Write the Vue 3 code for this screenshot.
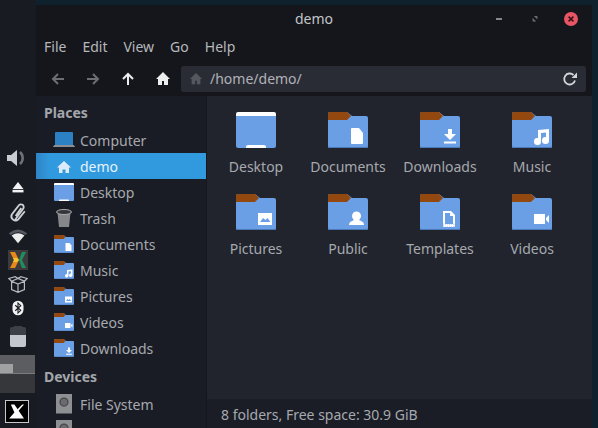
<script setup>
const places = [
  { name: 'Computer', icon: 'computer' },
  { name: 'demo', icon: 'home', active: true },
  { name: 'Desktop', icon: 'desktop' },
  { name: 'Trash', icon: 'trash' },
  { name: 'Documents', icon: 'documents' },
  { name: 'Music', icon: 'music' },
  { name: 'Pictures', icon: 'pictures' },
  { name: 'Videos', icon: 'videos' },
  { name: 'Downloads', icon: 'downloads' },
]

const devices = [
  { name: 'File System', icon: 'disk' },
  { name: 'recovery area on samsung nvme', icon: 'disk' },
]

const folders = [
  { name: 'Desktop', icon: 'desktop' },
  { name: 'Documents', icon: 'documents' },
  { name: 'Downloads', icon: 'downloads' },
  { name: 'Music', icon: 'music' },
  { name: 'Pictures', icon: 'pictures' },
  { name: 'Public', icon: 'public' },
  { name: 'Templates', icon: 'templates' },
  { name: 'Videos', icon: 'videos' },
]

const menu = ['File', 'Edit', 'View', 'Go', 'Help']
</script>

<template>
  <div class="desktop">
    <!-- shared folder artwork, 40x36 -->
    <svg class="defs" width="0" height="0">
      <defs>
        <symbol id="folder" viewBox="0 0 40 36">
          <path d="M0 2q0-2 2-2h17l5 4h14q2 0 2 2v28q0 2-2 2H2q-2 0-2-2z" fill="#6a9fe6" />
          <path d="M0 2q0-2 2-2h17l4 4-4 4H0z" fill="#93480f" />
          <rect y="35" width="40" height="1" fill="#4a78b8" />
        </symbol>
        <symbol id="desktop" viewBox="0 0 40 36">
          <path d="M0 4h40v30q0 2-2 2H2q-2 0-2-2z" fill="#6a9fe6" />
          <path d="M0 2q0-2 2-2h36q2 0 2 2v2H0z" fill="#fff" />
          <path d="M10 36v-1q0-2 2-2h16q2 0 2 2v1z" fill="#fff" />
        </symbol>
        <symbol id="documents" viewBox="0 0 40 36">
          <use href="#folder" width="40" height="36" />
          <path d="M23 17q0-1 1-1h7l4 5v10q0 1-1 1H24q-1 0-1-1z" fill="#fff" />
        </symbol>
        <symbol id="downloads" viewBox="0 0 40 36">
          <use href="#folder" width="40" height="36" />
          <path d="M28 17h4v5h4l-6 6-6-6h4z" fill="#fff" />
          <rect x="24" y="29.500" width="12" height="2" fill="#fff" />
        </symbol>
        <symbol id="music" viewBox="0 0 40 36">
          <use href="#folder" width="40" height="36" />
          <path d="M26 18l11-1v11.500a3.500 3.500 0 1 1-3-3.400V20.500l-5 .5v8.500a3.500 3.500 0 1 1-3-3.400z" fill="#fff" />
        </symbol>
        <symbol id="pictures" viewBox="0 0 40 36">
          <use href="#folder" width="40" height="36" />
          <rect x="22" y="19" width="14" height="12" fill="#fff" />
          <path d="M24 28l3-4 2.500 2 2-2 3 4z" fill="#6a9fe6" />
        </symbol>
        <symbol id="public" viewBox="0 0 40 36">
          <use href="#folder" width="40" height="36" />
          <circle cx="28.500" cy="22" r="4.500" fill="#fff" />
          <path d="M21 31q0-3 3-4l2-1h5l2 1q3 1 3 4z" fill="#fff" />
        </symbol>
        <symbol id="templates" viewBox="0 0 40 36">
          <use href="#folder" width="40" height="36" />
          <path d="M23 17h8l4 4v12H23z" fill="#fff" />
          <path d="M25 19h5v3h3v8h-8z" fill="#6a9fe6" />
          <path d="M23 30h12v3H23z" fill="#fff" stroke="#6a9fe6" stroke-width=".6" stroke-dasharray="1 1" />
        </symbol>
        <symbol id="videos" viewBox="0 0 40 36">
          <use href="#folder" width="40" height="36" />
          <rect x="22" y="20" width="11" height="10" fill="#fff" />
          <path d="M34 24l3-3v8l-3-3z" fill="#fff" />
        </symbol>
        <symbol id="computer" viewBox="0 0 40 36" overflow="visible">
          <path d="M2 4q0-2 2-2h32q2 0 2 2v24H2z" fill="#2c80c4" />
          <path d="M-2 31l3-3h38l3 3v1H-2z" fill="#8b8e94" />
        </symbol>
        <symbol id="home" viewBox="0 0 40 36">
          <path d="M20 8L6 21h4v11h7v-7h6v7h7V21h4z" fill="#dcebf7" />
        </symbol>
        <symbol id="trash" viewBox="0 0 40 36">
          <path d="M7 7h26l-3 29H10z" fill="#85878b" />
          <ellipse cx="20" cy="6" rx="15" ry="5" fill="#34363a" stroke="#a9abae" stroke-width="2" />
        </symbol>
        <symbol id="disk" viewBox="0 0 40 36" overflow="visible">
          <rect x="4" y="-2" width="32" height="39" fill="#8e8f92" />
          <circle cx="20" cy="14" r="8" fill="#6a6b6e" stroke="#47484b" stroke-width="2.500" />
        </symbol>
      </defs>
    </svg>

    <aside class="dock">
      <div class="tray">
        <svg class="tray-icon sound" viewBox="0 0 24 24">
          <path d="M3 9h4l6-5v16l-6-5H3z" fill="#c9ccd1" />
          <path d="M16 6a8 8 0 0 1 0 12" fill="none" stroke="#6f7278" stroke-width="2.500" />
        </svg>
        <svg class="tray-icon" viewBox="0 0 24 24">
          <path d="M12 5.500l6 7.500H6z" fill="#f1f2f3" />
          <rect x="6" y="14" width="12" height="2.800" fill="#f1f2f3" />
        </svg>
        <svg class="tray-icon" viewBox="0 0 24 24">
          <path d="M8 20l10-11a3 3 0 0 0-4.500-4L5 14a4.500 4.500 0 0 0 6.500 6l8-8M9 16l7-8" fill="none" stroke="#cfd1d5" stroke-width="2" transform="rotate(-6 12 12)" />
        </svg>
        <svg class="tray-icon" viewBox="0 0 24 24">
          <path d="M2 9q10-8 20 0l-2 2q-8-6-16 0z" fill="#55585e" />
          <path d="M5 11.500q7-5 14 0L12 20z" fill="#eceded" />
        </svg>
        <div class="app-badge">
          <svg viewBox="0 0 20 20">
            <rect width="20" height="20" fill="#3d3a3c" />
            <path d="M2 2h5l4 8-4 8H2l4-8z" fill="#e8871a" />
            <path d="M18 2h-4l-3 8 3 8h4l-4-8z" fill="#1f8f63" />
            <path d="M5 8h4l2 2-2 2H5l1-2z" fill="#f4c430" />
          </svg>
        </div>
        <svg class="tray-icon" viewBox="0 0 24 24">
          <path d="M5 9l7-3 7 3v9l-7 3-7-3zM5 9l7 3 7-3M12 12v9M5 9L2 6l7-2 3 2 3-2 7 2-3 3" fill="none" stroke="#b8bac0" stroke-width="1.300" />
        </svg>
        <svg class="tray-icon" viewBox="0 0 24 24">
          <rect x="6" y="4" width="12" height="16" rx="6" fill="#f1f2f3" />
          <path d="M9 9l6 5.500-3 3V6.500l3 3L9 15" fill="none" stroke="#1a1c24" stroke-width="1.200" />
        </svg>
        <div class="battery"><span class="battery-cap" /><span class="battery-level" /></div>
      </div>
      <div class="pager">
        <div class="pager-top"><span class="pager-win" /></div>
        <div class="pager-bottom" />
      </div>
      <div class="start">
        <svg viewBox="0 0 24 24">
          <path d="M5 4h4l11 16H3l6-7z" fill="#fff" />
          <path d="M18 4h2l-7 8-1-2z" fill="#fff" />
        </svg>
      </div>
    </aside>

    <main class="window">
      <div class="titlebar">
        <span class="title">demo</span>
        <div class="win-buttons">
          <span class="btn-min" />
          <svg class="btn-max" viewBox="0 0 10 10">
            <path d="M3 0h6v6zM1 3l6 6H1z" fill="#6b6d72" />
          </svg>
          <span class="btn-close">
            <svg viewBox="0 0 10 10"><path d="M2 2l6 6M8 2l-6 6" stroke="#3a1418" stroke-width="2" /></svg>
          </span>
        </div>
      </div>

      <nav class="menubar">
        <span v-for="item in menu" :key="item">{{ item }}</span>
      </nav>

      <div class="toolbar">
        <svg class="tool" viewBox="0 0 16 16"><path d="M14 8H3M8 3L3 8l5 5" fill="none" stroke="#6c6e73" stroke-width="2" /></svg>
        <svg class="tool" viewBox="0 0 16 16"><path d="M2 8h11M8 3l5 5-5 5" fill="none" stroke="#6c6e73" stroke-width="2" /></svg>
        <svg class="tool" viewBox="0 0 16 16"><path d="M8 14V3M3 8l5-5 5 5" fill="none" stroke="#eceded" stroke-width="2" /></svg>
        <svg class="tool" viewBox="0 0 16 16"><path d="M8 1L1 8h2v6h4v-4h2v4h4V8h2z" fill="#eceded" /></svg>
        <div class="location">
          <svg class="loc-home" viewBox="0 0 16 16"><path d="M8 1L1 8h2v6h4v-4h2v4h4V8h2z" fill="#55575e" /></svg>
          <span class="path">/home/demo/</span>
          <svg class="reload" viewBox="0 0 16 16">
            <path d="M13 9.500A5.500 5.500 0 1 1 11.500 4" fill="none" stroke="#d5d6d9" stroke-width="1.800" />
            <path d="M15 1.500V7H9.500z" fill="#d5d6d9" />
          </svg>
        </div>
      </div>

      <div class="body">
        <section class="sidebar">
          <h3>Places</h3>
          <div v-for="p in places" :key="p.name" class="side-row" :class="{ active: p.active }">
            <svg class="side-icon"><use :href="'#' + p.icon" /></svg>
            <span>{{ p.name }}</span>
          </div>
          <h3 class="devices">Devices</h3>
          <div v-for="d in devices" :key="d.name" class="side-row">
            <svg class="side-icon"><use :href="'#' + d.icon" /></svg>
            <span>{{ d.name }}</span>
          </div>
        </section>

        <section class="files">
          <div class="grid">
            <div v-for="f in folders" :key="f.name" class="item">
              <svg class="item-icon"><use :href="'#' + f.icon" /></svg>
              <span>{{ f.name }}</span>
            </div>
          </div>
          <footer class="status">8 folders, Free space: 30.9 GiB</footer>
        </section>
      </div>
    </main>
  </div>
</template>

<style>
html, body { margin: 0; background: #10212e; overflow: hidden; }
</style>

<style scoped>
.desktop {
  width: 598px;
  height: 428px;
  display: flex;
  overflow: hidden;
  position: relative;
  background: #10212e;
  font-family: "Noto Sans", sans-serif;
  font-size: 14px;
  color: #aeb1b6;
}

.defs { position: absolute; }

.dock {
  width: 36px;
  flex: none;
  background: #191b23;
  display: flex;
  flex-direction: column;
  box-sizing: border-box;
  padding-top: 146px;
}

.tray { display: flex; flex-direction: column; align-items: center; width: 35px; height: 209px; }

.tray-icon { width: 22px; height: 22px; margin: 1px 0; display: block; flex: none; }
.sound { margin: 0 4px 6px 0; width: 24px; height: 24px; }

.app-badge { width: 20px; height: 20px; margin: 2px 0; flex: none; }
.app-badge svg { display: block; width: 100%; height: 100%; }

.battery {
  width: 16px;
  height: 20px;
  margin-top: 7px;
  flex: none;
  background: #3d4047;
  border-radius: 2px;
  position: relative;
  display: flex;
  align-items: flex-end;
}
.battery-cap {
  position: absolute;
  top: -1px;
  left: 4px;
  width: 8px;
  height: 1px;
  background: #3d4047;
}
.battery-level { display: block; width: 100%; height: 12px; background: #c3c6cd; border-radius: 0 0 2px 2px; }

.pager { width: 35px; height: 38px; display: flex; flex-direction: column; flex: none; }
.pager-top { height: 19px; flex: none; box-sizing: border-box; background: #5c5d60; border-bottom: 1px solid #7a7b7e; display: flex; align-items: flex-end; }
.pager-win { display: block; width: 13px; height: 9px; background: #a0a1a3; }
.pager-bottom { flex: 1; background: #36373a; }

.start {
  width: 22px;
  height: 21px;
  margin: 7px 0 0 5px;
  background: #000;
  border: 1px solid #c8c8c8;
  flex: none;
}
.start svg { display: block; width: 100%; height: 100%; }

.window {
  flex: none;
  width: 556px;
  height: 423px;
  margin-top: 5px;
  display: flex;
  flex-direction: column;
  background: #15161b;
}

.titlebar {
  height: 27px;
  flex: none;
  position: relative;
  display: flex;
  align-items: center;
  justify-content: center;
}
.title { color: #c3c5c9; font-size: 14px; }

.win-buttons {
  position: absolute;
  right: 14px;
  top: 4px;
  display: flex;
  align-items: center;
  height: 20px;
}
.btn-min { width: 6px; height: 2px; background: #85878b; margin-right: 30px; }
.btn-max { width: 6px; height: 6px; margin-right: 26px; }
.btn-close {
  width: 14px;
  height: 14px;
  border-radius: 50%;
  background: #ea5566;
  display: flex;
  align-items: center;
  justify-content: center;
}
.btn-close svg { width: 8px; height: 8px; }

.menubar {
  height: 29px;
  flex: none;
  display: flex;
  align-items: center;
  gap: 16px;
  padding-left: 8px;
  color: #b6b8bc;
}

.toolbar {
  height: 35px;
  flex: none;
  display: flex;
  align-items: center;
  padding-left: 14px;
  gap: 19px;
}
.tool { width: 16px; height: 16px; flex: none; }

.location {
  width: 405px;
  height: 26px;
  margin-left: -9px;
  flex: none;
  background: #2a2c35;
  border-radius: 3px;
  display: flex;
  align-items: center;
  padding: 0 8px;
  box-sizing: border-box;
}
.loc-home { width: 14px; height: 14px; flex: none; }
.path { margin-left: 7px; flex: 1; color: #b0b2b7; }
.reload { width: 16px; height: 16px; flex: none; }

.body { flex: 1; display: flex; min-height: 0; }

.sidebar {
  width: 170px;
  flex: none;
  background: #191c25;
  overflow: hidden;
  padding-top: 6px;
  border-right: 1px solid #15171d;
}
.sidebar h3 {
  margin: 0 0 3px;
  padding-left: 8px;
  height: 22px;
  line-height: 22px;
  font-size: 14px;
  font-weight: 700;
  color: #a3a6ab;
}
.sidebar h3.devices { margin: 2px 0 0; height: 28px; line-height: 28px; }

.side-row {
  height: 26px;
  display: flex;
  align-items: center;
  padding-left: 18px;
  gap: 6px;
  color: #a6a9ae;
  white-space: nowrap;
}
.side-row.active {
  background: linear-gradient(90deg, #2f84c4 0, #319adf 14px);
  color: #e6f2fb;
}
.side-icon { width: 20px; height: 18px; flex: none; overflow: visible; }

.files {
  flex: 1;
  min-width: 0;
  background: #21242d;
  display: flex;
  flex-direction: column;
}

.grid {
  flex: 1;
  display: grid;
  grid-template-columns: repeat(4, 92px);
  grid-auto-rows: 82px;
  align-content: start;
  padding: 16px 0 0 3px;
}

.item {
  display: flex;
  flex-direction: column;
  align-items: center;
  color: #a6a9ae;
}
.item-icon { width: 40px; height: 36px; flex: none; margin-bottom: 9px; }

.status {
  height: 28px;
  flex: none;
  display: flex;
  align-items: center;
  padding-left: 14px;
  background: #1a1d26;
  border-top: 1px solid #1c1e25;
  color: #a6a9ae;
}
</style>
